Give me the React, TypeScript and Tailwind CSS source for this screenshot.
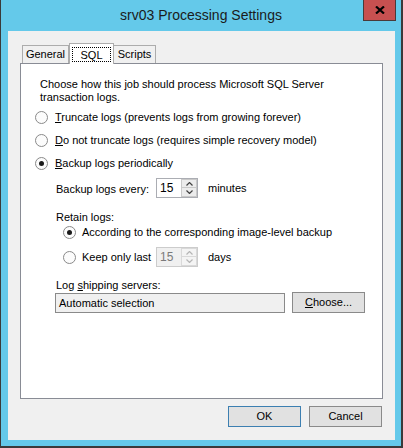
import React from "react";

const Radio: React.FC<{ checked?: boolean }> = ({ checked }) => (
  <div className="w-[13px] h-[13px] rounded-full border border-[#8a8a8a] bg-[#fcfcfc] flex items-center justify-center shrink-0">
    {checked && <div className="w-[5px] h-[5px] rounded-full bg-[#1a1a1a]" />}
  </div>
);

const Chevron: React.FC<{ up?: boolean; disabled?: boolean }> = ({ up, disabled }) => (
  <svg width="7" height="4" viewBox="0 0 7 4">
    <path
      d={up ? "M0.5 3.5 L3.5 0.5 L6.5 3.5" : "M0.5 0.5 L3.5 3.5 L6.5 0.5"}
      fill="none"
      stroke={disabled ? "#b5b5b5" : "#404040"}
      strokeWidth="1.2"
    />
  </svg>
);

const Spinner: React.FC<{ value: string; disabled?: boolean }> = ({ value, disabled }) => (
  <div
    className={`w-[42px] h-[20px] border flex shrink-0 ${
      disabled ? "border-[#cccccc] bg-[#f0f0f0] text-[#7a7a7a]" : "border-[#abadb3] bg-white text-black"
    }`}
  >
    <div className="flex-1 pl-[3px] flex items-center text-[12px]">{value}</div>
    <div className="w-[16px] flex flex-col">
      <div
        className={`h-[9px] border flex items-center justify-center ${
          disabled ? "border-[#d9d9d9] bg-[#f4f4f4]" : "border-[#c9c9c9] bg-[#ececec]"
        }`}
      >
        <Chevron up disabled={disabled} />
      </div>
      <div
        className={`h-[9px] border border-t-0 flex items-center justify-center ${
          disabled ? "border-[#d9d9d9] bg-[#f4f4f4]" : "border-[#c9c9c9] bg-[#ececec]"
        }`}
      >
        <Chevron disabled={disabled} />
      </div>
    </div>
  </div>
);

export default function App() {
  return (
    <div
      className="w-[403px] h-[448px] bg-[#64c9ea] border-l border-r-2 border-b-2 border-[#3a3a3a] flex flex-col text-[11px] text-black whitespace-nowrap"
      style={{ fontFamily: '"Liberation Sans", Arial, sans-serif' }}
    >
      {/* title bar */}
      <div className="h-[31px] relative flex items-center justify-center shrink-0">
        <span className="text-[14px] text-[#1b1b1b] pb-[1px]">srv03 Processing Settings</span>
        <div className="absolute top-0 right-[5px] w-[33px] h-[21px] bg-[#c75050] border border-t-0 border-[#4a3a3a] flex items-center justify-center">
          <svg width="10" height="8" viewBox="0 0 10 8">
            <path d="M1 0.5 L9 7.5 M9 0.5 L1 7.5" stroke="#000" strokeWidth="2.2" />
          </svg>
        </div>
      </div>

      {/* client area */}
      <div className="ml-[7px] w-[387px] h-[409px] bg-[#f0f0f0] pt-[12px] px-[12px] flex flex-col">
        {/* tabs */}
        <div className="h-[21px] flex items-end pl-[2px] -mb-[1px] shrink-0">
          <div className="w-[47px] h-[18px] mb-[1px] border border-b-0 border-[#acacac] bg-[#f0f0f0] flex items-center justify-center">
            General
          </div>
          <div className="relative z-10 w-[45px] h-[21px] border border-b-0 border-[#acacac] bg-white flex items-start justify-center pt-[3px]">
            SQL
            <div className="absolute left-[2px] top-[3px] w-[39px] h-[15px] border border-dotted border-black" />
          </div>
          <div className="w-[42px] h-[18px] mb-[1px] border border-l-0 border-b-0 border-[#acacac] bg-[#f0f0f0] flex items-center justify-center">
            Scripts
          </div>
        </div>

        {/* panel */}
        <div className="h-[336px] border border-[#898c95] bg-white flex flex-col pl-[14px]">
          <p className="mt-[14px] ml-[5px] leading-[13px]">
            Choose how this job should process Microsoft SQL Server
            <br />
            transaction logs.
          </p>

          <div className="mt-[3px] h-[20px] flex items-center gap-[7px]">
            <Radio />
            <span>
              <u>T</u>runcate logs (prevents logs from growing forever)
            </span>
          </div>
          <div className="mt-[3px] h-[20px] flex items-center gap-[7px]">
            <Radio />
            <span>
              <u>D</u>o not truncate logs (requires simple recovery model)
            </span>
          </div>
          <div className="mt-[3px] h-[20px] flex items-center gap-[7px]">
            <Radio checked />
            <span>
              <u>B</u>ackup logs periodically
            </span>
          </div>

          <div className="mt-[5px] h-[20px] flex items-center ml-[21px]">
            <span className="w-[100px] pt-[2px]">Backup logs every:</span>
            <Spinner value="15" />
            <span className="ml-[10px]">minutes</span>
          </div>

          <div className="mt-[12px] h-[14px] flex items-center ml-[21px]">Retain logs:</div>

          <div className="h-[16px] flex items-center ml-[28px] gap-[6px]">
            <Radio checked />
            <span>According to the corresponding image-level backup</span>
          </div>

          <div className="mt-[7px] h-[20px] flex items-center ml-[28px]">
            <Radio />
            <span className="ml-[6px] w-[74px]">Keep only last</span>
            <Spinner value="15" disabled />
            <span className="ml-[10px]">days</span>
          </div>

          <div className="mt-[11px] h-[14px] flex items-center ml-[21px]">
            <span>
              Log <u>s</u>hipping servers:
            </span>
          </div>

          <div className="mt-[1px] flex items-center ml-[20px]">
            <div className="w-[230px] h-[20px] border border-[#8a8a8a] bg-[#f0f0f0] flex items-center pl-[3px]">
              Automatic selection
            </div>
            <div className="ml-[7px] w-[73px] h-[21px] -mt-[1px] border border-[#8a8a8a] bg-[#e1e1e1] flex items-center justify-center">
              <span>
                <u>C</u>hoose...
              </span>
            </div>
          </div>
        </div>

        {/* buttons */}
        <div className="mt-[7px] flex justify-end gap-[8px] mr-[1px]">
          <div className="w-[73px] h-[21px] border border-[#3c7fb1] bg-[#e1e1e1] flex items-center justify-center">
            OK
          </div>
          <div className="w-[73px] h-[21px] border border-[#8a8a8a] bg-[#e1e1e1] flex items-center justify-center">
            Cancel
          </div>
        </div>
      </div>
    </div>
  );
}
